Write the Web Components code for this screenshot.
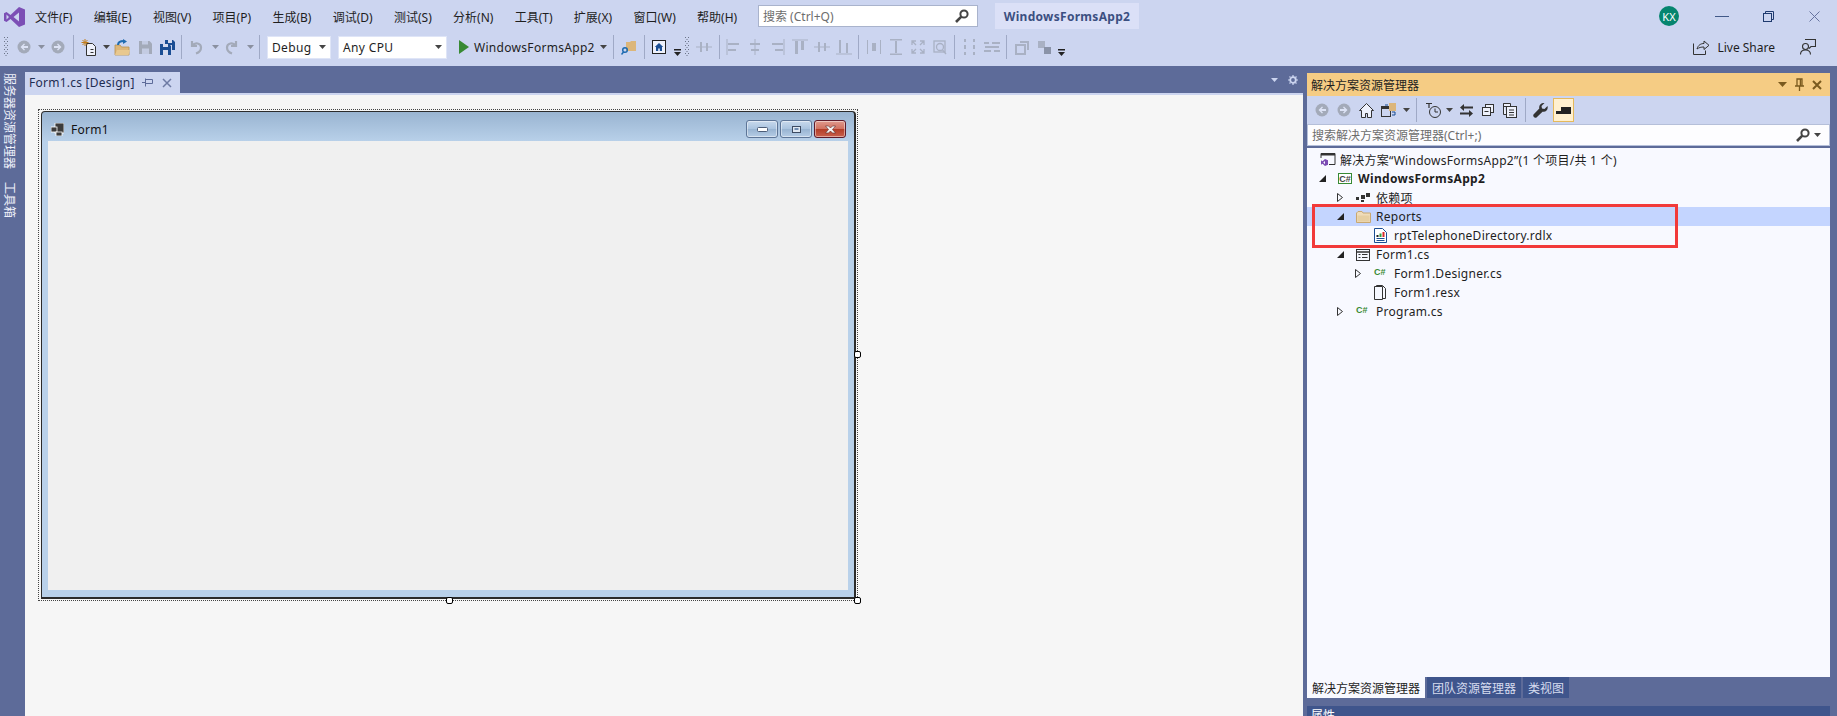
<!DOCTYPE html>
<html>
<head>
<meta charset="utf-8">
<style>
  html, body { margin: 0; padding: 0; overflow: hidden; }
  body { font: 12px "Noto Sans", "Noto Sans CJK SC", sans-serif; color: #1e1e1e; background: #5d6b99; }
</style>
</head>
<body>
<vs-app></vs-app>
<script>
const GREY = "#a3aab9";
const LINE = "#a9b1c4";
const ICONS = {
  grip: `<svg width="6" height="22" viewBox="0 0 6 22"><path d="M1 1h1v1H1zM4 1h1v1H4zM2.500 3h1v1h-1zM1 5h1v1H1zM4 5h1v1H4zM2.500 7h1v1h-1zM1 9h1v1H1zM4 9h1v1H4zM2.500 11h1v1h-1zM1 13h1v1H1zM4 13h1v1H4zM2.500 15h1v1h-1zM1 17h1v1H1zM4 17h1v1H4zM2.500 19h1v1h-1z" fill="#6b7488"/></svg>`,
  sep: `<svg width="1" height="24"><rect width="1" height="24" fill="#9fa9c6"/></svg>`,
  arrow: `<svg width="7" height="4"><path d="M0 0h7L3.500 4z" fill="#444"/></svg>`,
  arrowoff: `<svg width="7" height="4"><path d="M0 0h7L3.500 4z" fill="#8a90a0"/></svg>`,
  more: `<svg width="7" height="7" style="margin-top:11px"><rect width="7" height="1.500" fill="#222"/><path d="M0 3h7L3.500 7z" fill="#222"/></svg>`,
  back: `<svg width="14" height="14" viewBox="0 0 14 14"><circle cx="7" cy="7" r="6.500" fill="${GREY}"/><path d="M11 6H6.500L8 4.300 7 3.500 3.500 7 7 10.500l1-.8L6.500 8H11z" fill="#dde3f5"/></svg>`,
  fwd: `<svg width="14" height="14" viewBox="0 0 14 14"><circle cx="7" cy="7" r="6.500" fill="${GREY}"/><path d="M3 6h4.500L6 4.300 7 3.500 10.500 7 7 10.500l-1-.8L7.500 8H3z" fill="#dde3f5"/></svg>`,
  newproj: `<svg width="16" height="17" viewBox="0 0 16 17"><path d="M5.500 4.500h6l3 3v9h-9z" fill="#eef1fb" stroke="#333"/><path d="M9.500 13.500h3M9.500 10.500h3" stroke="#333"/><path d="M4 0v7M.5 3.500h7M1.500 1l5 5M6.500 1l-5 5" stroke="#c27d1a"/></svg>`,
  open: `<svg width="17" height="17" viewBox="0 0 17 17"><path d="M1 6h5l1.500 2H15v8H1z" fill="#dcb67a" stroke="#b8924f" stroke-width=".8"/><path d="M3 11h13l-1.500 5H1z" fill="#e8c88f"/><path d="M4 6c0-3 3-4 6-4" fill="none" stroke="#1e6bb0" stroke-width="2"/><path d="M9 0l4 2.500L9 5z" fill="#1e6bb0"/></svg>`,
  save: `<svg width="13" height="13" viewBox="0 0 13 13"><path d="M0 0h10.500L13 2.500V13H0z" fill="${GREY}"/><rect x="3" y="0" width="6" height="3.500" fill="#c3cbe2"/><rect x="3" y="7.500" width="7" height="5.500" fill="#c3cbe2"/></svg>`,
  saveall: `<svg width="15" height="15" viewBox="0 0 15 15"><path d="M5 0h8l2 2v8h-3V5H5z" fill="#1b4e94"/><rect x="8" y="0" width="4" height="3" fill="#d5dbee"/><path d="M0 4h9l2 2v9H0z" fill="#1b4e94"/><rect x="3" y="4" width="5" height="3" fill="#d5dbee"/><rect x="3" y="10" width="5" height="5" fill="#d5dbee"/></svg>`,
  undo: `<svg width="14" height="16" viewBox="0 0 14 16"><path d="M3 2v5h5M3.500 6.500C6 3 12 4 12 8.500c0 3-2 5-5 6" fill="none" stroke="${GREY}" stroke-width="2.200"/></svg>`,
  redo: `<svg width="14" height="16" viewBox="0 0 14 16"><path d="M11 2v5H6M10.500 6.500C8 3 2 4 2 8.500c0 3 2 5 5 6" fill="none" stroke="${GREY}" stroke-width="2.200"/></svg>`,
  play: `<svg width="10" height="14"><path d="M0 0l10 7-10 7z" fill="#388a34"/></svg>`,
  find: `<svg width="16" height="16" viewBox="0 0 16 16"><path d="M5 3h4l1-1h5v10H5z" fill="#dcb67a"/><circle cx="4" cy="11" r="2.300" fill="none" stroke="#1e6bb0" stroke-width="1.500"/><path d="M2.500 13L.5 15.500" stroke="#1e6bb0" stroke-width="1.500"/></svg>`,
  win: `<svg width="14" height="14" viewBox="0 0 14 14"><rect x=".5" y=".5" width="13" height="13" fill="#eef1fb" stroke="#222"/><path d="M7 3L2.800 7H4v4h2.200V8.500h1.600V11H10V7h1.200z" fill="#1b4e94"/></svg>`,
  al1: `<svg width="14" height="16"><path d="M1 0v16" stroke="${LINE}"/><path d="M2 4h11v2H2zM2 10h8v2H2z" fill="${LINE}"/></svg>`,
  al2: `<svg width="14" height="16"><path d="M7 0v16" stroke="${LINE}"/><path d="M2 4h10v2H2zM3 10h8v2H3z" fill="${LINE}"/></svg>`,
  al3: `<svg width="14" height="16"><path d="M13 0v16" stroke="${LINE}"/><path d="M1 4h11v2H1zM4 10h8v2H4z" fill="${LINE}"/></svg>`,
  al4: `<svg width="16" height="16"><path d="M0 1h16" stroke="${LINE}"/><path d="M3 2h3v13H3zM9 2h3v9H9z" fill="${LINE}"/></svg>`,
  al5: `<svg width="16" height="14"><path d="M0 7h16" stroke="${LINE}"/><path d="M4 2h2v10H4zM10 3h2v8h-2z" fill="${LINE}"/></svg>`,
  al6: `<svg width="16" height="16"><path d="M0 15h16" stroke="${LINE}"/><path d="M3 1h2v13H3zM10 4h2v10h-2z" fill="${LINE}"/></svg>`,
  sz1: `<svg width="14" height="14"><path d="M.5 0v14M13.500 0v14" stroke="${LINE}"/><path d="M5 3h4v8H5z" fill="${LINE}"/></svg>`,
  sz2: `<svg width="14" height="16"><path d="M1 .5h12M1 15.500h12" stroke="${LINE}" stroke-width="2"/><path d="M6 2h2v12H6z" fill="${LINE}"/></svg>`,
  sz3: `<svg width="14" height="14" fill="none" stroke="${LINE}" stroke-width="1.300"><path d="M1 5V1h4M9 1h4v4M13 9v4H9M5 13H1V9M1 1l4 4M13 1L9 5M13 13L9 9M1 13l4-4"/></svg>`,
  sz4: `<svg width="14" height="15" fill="none" stroke="${LINE}" stroke-width="1.300"><rect x="1" y="1" width="11" height="11"/><circle cx="7" cy="7" r="3.500"/><path d="M9.500 10l3.500 4"/></svg>`,
  sp1: `<svg width="14" height="16"><path d="M2 0v3M2 6v4M2 13v3M11 0v3M11 6v4M11 13v3" stroke="${LINE}" stroke-width="2"/></svg>`,
  sp2: `<svg width="16" height="14"><path d="M0 3h5M8 3h8M0 11h7M10 11h6M1 7h14" stroke="${LINE}" stroke-width="2"/></svg>`,
  or1: `<svg width="15" height="15" fill="none" stroke="${LINE}" stroke-width="2"><rect x="1" y="5" width="9" height="9"/><path d="M5 2h8v8"/></svg>`,
  or2: `<svg width="13" height="13"><rect x="0" y="0" width="7" height="7" fill="${LINE}"/><rect x="6" y="6" width="7" height="7" fill="#8a93a8"/></svg>`,
  share: `<svg width="17" height="15" viewBox="0 0 17 15" fill="none" stroke="#333"><path d="M.5 3.500v11h12v-4"/><path d="M4 9c1-4 4-5.500 7-5.500V1l5 4.300-5 4.200V7C8 7 6 7.500 4 9z"/></svg>`,
  feedback: `<svg width="16" height="16" viewBox="0 0 16 16" fill="none" stroke="#333" stroke-width="1.100"><circle cx="5.500" cy="7.500" r="3"/><path d="M.5 15.500c0-3 2-4.500 5-4.500s5 1.500 5 4.500"/><path d="M5 .5h10.500v7H11l-2 2"/></svg>`,
  mag: `<svg width="14" height="14" viewBox="0 0 14 14" fill="none" stroke="#444" stroke-width="2"><circle cx="9" cy="5" r="3.600"/><path d="M6.300 7.700L1 13" stroke-width="2.600"/></svg>`,
  min: `<svg width="14" height="2"><rect width="14" height="1" fill="#1e3a6e" opacity=".8"/></svg>`,
  restore: `<svg width="11" height="11" fill="none" stroke="#1e3a6e"><rect x=".5" y="2.500" width="8" height="8"/><path d="M2.500 2.500v-2h8v8h-2"/></svg>`,
  close: `<svg width="11" height="11" stroke="#6673a0"><path d="M.5.500l10 10M10.500.500l-10 10"/></svg>`,
  pintab: `<svg width="11" height="9" fill="none" stroke="#5d6b99"><path d="M0 4.500h3.500M3.500 .5v8M3.500 1.500h7v4h-7"/></svg>`,
  closetab: `<svg width="10" height="10" stroke="#6d7aa3" stroke-width="1.500"><path d="M1 1l8 8M9 1L1 9"/></svg>`,
  welldrop: `<svg width="7" height="4"><path d="M0 0h7L3.500 4z" fill="#ccd5f0"/></svg>`,
  gear: `<svg width="10" height="10" viewBox="0 0 10 10"><circle cx="5" cy="5" r="2.800" fill="none" stroke="#ccd5f0" stroke-width="1.800"/><path d="M5 0v2M5 8v2M0 5h2M8 5h2M1.500 1.500l1 1M7.500 7.500l1 1M8.500 1.500l-1 1M2.500 7.500l-1 1" stroke="#ccd5f0" stroke-width="1.200"/></svg>`,
  tdrop: `<svg width="9" height="5"><path d="M0 0h9L4.500 5z" fill="#7a5a1e"/></svg>`,
  tpin: `<svg width="9" height="13" fill="none" stroke="#7a5a1e" stroke-width="1.300"><path d="M2 1h5v7H2zM0 8h9M4.500 8v5"/><path d="M5.500 1v7" stroke-width="1.500"/></svg>`,
  tclose: `<svg width="10" height="10" stroke="#7a5a1e" stroke-width="2"><path d="M1 1l8 8M9 1L1 9"/></svg>`,
  home: `<svg width="15" height="15" viewBox="0 0 15 15"><path d="M7.500 .5L.5 7.500H2.500v7h4v-4h2v4h4v-7h2z" fill="#eef1fb" stroke="#333"/></svg>`,
  sync: `<svg width="16" height="14" viewBox="0 0 16 14"><rect x=".5" y="3.500" width="9" height="10" fill="#ccd5f0" stroke="#333"/><rect x="1" y="4" width="8" height="2" fill="#333"/><rect x="8" y="0" width="7" height="8" fill="#dcb67a"/><path d="M11 9h3v3h-3" fill="none" stroke="#1b4e94"/><path d="M4 2h3" stroke="#1b4e94"/></svg>`,
  history: `<svg width="15" height="15" viewBox="0 0 15 15" fill="none" stroke="#333"><circle cx="9" cy="9" r="5.500"/><path d="M9 5.500V9h3"/><path d="M0 .5h6M3 .5V5" stroke-width="1.200"/></svg>`,
  swap: `<svg width="13" height="13" viewBox="0 0 13 13" fill="#333"><path d="M4 0v2.500h9V4.500H4V7L0 3.500zM9 6v2.500H0v2h9V13l4-3.500z"/></svg>`,
  collapse: `<svg width="12" height="12" fill="#eef1fb" stroke="#333"><rect x="3.500" y=".5" width="8" height="8"/><rect x=".5" y="3.500" width="8" height="8"/><path d="M2.500 7.500h4"/></svg>`,
  copies: `<svg width="14" height="15" fill="#eef1fb" stroke="#333"><path d="M.5 .5h7v3h-7zM.5 .5v11h3"/><rect x="3.500" y="3.500" width="10" height="11"/><path d="M6 7h5M6 9.500h5M6 12h5"/></svg>`,
  wrench: `<svg width="15" height="15" viewBox="0 0 15 15"><path d="M14.500 3l-3 3-2.500-.5L8.500 3l3-3C8.500-.5 5.500 2 6.300 5.500L.5 11.500c-1 2 1 4 3 3L9.500 8.700C13 9.500 15.500 6.500 14.500 3z" fill="#333"/></svg>`,
  pending: `<svg width="15" height="7"><rect x="0" y="4" width="15" height="3" fill="#222"/><rect x="5" y="0" width="10" height="4" fill="#222"/></svg>`,
  tri: `<svg width="7" height="7"><path d="M7 0v7H0z" fill="#222"/></svg>`,
  hollow: `<svg width="6" height="9" fill="none" stroke="#333"><path d="M.5 .5l5 4-5 4z"/></svg>`,
  sln: `<svg width="16" height="14" viewBox="0 0 16 14"><path d="M1 5V.5h14v11H9" fill="none" stroke="#333"/><rect x="1" y=".5" width="14" height="2" fill="#333"/><path d="M5 6L2.500 8.300 1 7.300v4.400l1.500-1 2.500 2.300 3-1.300V7.300zM5 8v3.300L3.300 9.600z" fill="#7b4bb3" fill-rule="evenodd"/></svg>`,
  deps: `<svg width="14" height="9" fill="#333"><rect x="0" y="4" width="3" height="3"/><rect x="5" y="2" width="4" height="4"/><rect x="5" y="7" width="3" height="2"/><rect x="10" y="0" width="4" height="4"/></svg>`,
  folder: `<svg width="15" height="12" viewBox="0 0 15 12"><path d="M.5 2l1.500-1.500h4L7 2h7.500v9.500H.5z" fill="#efdcba" stroke="#c9a871"/><path d="M1.500 4.500h12v6h-12z" fill="#e6cfa3"/></svg>`,
  report: `<svg width="13" height="15" viewBox="0 0 13 15"><path d="M.5 .5h8l4 4v10H.5z" fill="#fff" stroke="#1b4e94"/><path d="M2.500 7h2v2h-2z" fill="#222"/><path d="M5.500 5.500h2V9h-2z" fill="#2f9e3f"/><path d="M8.500 4h2v5h-2z" fill="#d62b2b"/><path d="M2.500 10.500h8M2.500 12.500h8" stroke="#1b4e94"/></svg>`,
  form: `<svg width="14" height="12" viewBox="0 0 14 12" fill="#f6f8ff" stroke="#333"><rect x=".5" y=".5" width="13" height="11"/><path d="M.5 3h13" stroke-width="1.500"/><path d="M2.500 5.500h2M6 5.500h5.500M2.500 8.500h2M6 8.500h5.500"/></svg>`,
  resx: `<svg width="12" height="15" viewBox="0 0 12 15" fill="#f6f8ff" stroke="#333"><path d="M.5 1.500h8v13h-8z"/><path d="M2.500 1.500v-1h6l3 3v10h-3" fill="none"/></svg>`,
  formcap: `<svg width="13" height="13"><rect x="4" y="0" width="9" height="10" fill="#3c3c3c" stroke="#fff" stroke-width=".8"/><rect x="0" y="4" width="6" height="5" fill="#3c3c3c" stroke="#fff" stroke-width=".8"/><rect x="5" y="9" width="6" height="4" fill="#3c3c3c" stroke="#fff" stroke-width=".8"/></svg>`
};

class VsIcon extends HTMLElement {
  constructor () {
    super();
    this.attachShadow({mode: "open"});
  }
  connectedCallback () {
    this.shadowRoot.innerHTML = `
    <style>
      :host { display: inline-flex; align-items: center; justify-content: center; flex: none; }
      svg { display: block; }
    </style>
    ${ICONS[this.getAttribute("name")] || ""}`;
  }
}
customElements.define("vs-icon", VsIcon);

// one toolbar row: "icon:width" cells, widths set so each icon falls on its spot
class VsTools extends HTMLElement {
  constructor () {
    super();
    this.attachShadow({mode: "open"});
  }
  connectedCallback () {
    let cells = this.getAttribute("cells").trim().split(/\s+/).map(c => {
      let [name, w] = c.split(":");
      return `<vs-icon name="${name}" style="width:${w}px"></vs-icon>`;
    }).join("");
    this.shadowRoot.innerHTML = `
    <style>
      :host { display: flex; align-items: center; height: 100%; flex: none; }
    </style>
    ${cells}`;
  }
}
customElements.define("vs-tools", VsTools);

class VsCombo extends HTMLElement {
  constructor () {
    super();
    this.attachShadow({mode: "open"});
  }
  connectedCallback () {
    this.shadowRoot.innerHTML = `
    <style>
      :host { display: flex; align-items: center; justify-content: space-between; height: 23px; box-sizing: border-box;
              background: #fff; border: 1px solid #dfe5f7; padding: 0 3px 0 4px; flex: none; color: #1e1e1e; letter-spacing: .35px; }
    </style>
    <slot></slot><vs-icon name="arrow" style="width:10px"></vs-icon>`;
  }
}
customElements.define("vs-combo", VsCombo);

class VsMenubar extends HTMLElement {
  constructor () {
    super();
    this.attachShadow({mode: "open"});
  }
  connectedCallback () {
    let items = ["文件(F)", "编辑(E)", "视图(V)", "项目(P)", "生成(B)", "调试(D)", "测试(S)", "分析(N)", "工具(T)", "扩展(X)", "窗口(W)", "帮助(H)"];
    this.shadowRoot.innerHTML = `
    <style>
      :host { display: flex; align-items: center; height: 33px; flex: none; background: #ccd5f0; position: relative; }
      .logo { width: 25px; flex: none; display: flex; justify-content: center; padding-left: 3px; box-sizing: border-box; }
      .menu { width: 733px; flex: none; display: flex; padding-left: 10px; box-sizing: border-box; gap: 21.3px; }
      .search { width: 220px; height: 22px; flex: none; box-sizing: border-box; background: #fff; border: 1px solid #a9b3cc;
                display: flex; align-items: center; justify-content: space-between; padding: 0 8px 0 4px; color: #6d6d6d; margin-top: -1px; }
      .pill { margin-left: 17px; width: 144px; height: 26px; flex: none; background: #dbe0f7; color: #3b4f81; font-weight: 700; letter-spacing: .3px;
              display: flex; align-items: center; justify-content: center; margin-top: -1px; }
      .right { margin-left: auto; display: flex; align-items: center; }
      .avatar { width: 20px; height: 20px; border-radius: 50%; background: #05856f; color: #fff; font-size: 11px; margin-right: 20px;
                display: flex; align-items: center; justify-content: center; margin-top: -1px; }
      .wbtn { width: 46px; display: flex; justify-content: center; }
    </style>
    <div class="logo">
      <svg width="21" height="20" viewBox="0 0 21 20"><path d="M15 0L6.500 8 2.500 5 0 6.200v7.600L2.500 15l4-3L15 20l6-2.500v-15zM2.500 7.500L5 10l-2.500 2.500zM15 5.500v9L9.500 10z" fill="#7c4fb5" fill-rule="evenodd"/></svg>
    </div>
    <div class="menu">${items.map(i => `<span>${i}</span>`).join("")}</div>
    <div class="search"><span>搜索 (Ctrl+Q)</span><vs-icon name="mag"></vs-icon></div>
    <div class="pill">WindowsFormsApp2</div>
    <div class="right">
      <div class="avatar">KX</div>
      <div class="wbtn"><vs-icon name="min"></vs-icon></div>
      <div class="wbtn"><vs-icon name="restore"></vs-icon></div>
      <div class="wbtn"><vs-icon name="close"></vs-icon></div>
    </div>`;
  }
}
customElements.define("vs-menubar", VsMenubar);

class VsToolbar extends HTMLElement {
  constructor () {
    super();
    this.attachShadow({mode: "open"});
  }
  connectedCallback () {
    this.shadowRoot.innerHTML = `
    <style>
      :host { display: flex; align-items: center; height: 33px; flex: none; background: #ccd5f0; box-sizing: border-box; padding-bottom: 5px; }
      .debug { width: 64px; margin-left: 7px; }
      .cpu { width: 109px; margin-left: 7px; }
      .play { margin-left: 12px; width: 10px; }
      .start { margin-left: 5px; width: 121px; letter-spacing: .3px; white-space: nowrap; }
      .right { margin-left: auto; display: flex; align-items: center; padding-right: 21px; }
      .live { margin: 0 25px 0 7px; }
    </style>
    <vs-tools cells="grip:12 back:24 arrowoff:10 fwd:24 sep:6 newproj:26 arrow:8 open:24 save:22 saveall:22 sep:6 undo:24 arrowoff:14 redo:20 arrowoff:16 sep:2"></vs-tools>
    <vs-combo class="debug">Debug</vs-combo>
    <vs-combo class="cpu">Any CPU</vs-combo>
    <vs-icon class="play" name="play"></vs-icon>
    <span class="start">WindowsFormsApp2</span>
    <vs-tools cells="arrow:16 sep:4 find:28 sep:2 win:28 more:8 grip:12 al5:22 sep:8 al1:20 al2:24 al3:22 al4:22 al5:22 al6:22 sep:6 sz1:26 sz2:18 sz3:26 sz4:18 sep:10 sp1:22 sp2:22 sep:6 or1:26 or2:18 more:16"></vs-tools>
    <div class="right">
      <vs-icon name="share"></vs-icon>
      <span class="live">Live Share</span>
      <vs-icon name="feedback"></vs-icon>
    </div>`;
  }
}
customElements.define("vs-toolbar", VsToolbar);

class VsRail extends HTMLElement {
  constructor () {
    super();
    this.attachShadow({mode: "open"});
  }
  connectedCallback () {
    this.shadowRoot.innerHTML = `
    <style>
      :host { display: flex; flex-direction: column; width: 25px; flex: none; background: #5d6b99; color: #eef0fa;
              padding-top: 7px; box-sizing: border-box; align-items: flex-start; }
      span { writing-mode: vertical-rl; text-orientation: sideways; line-height: 18px; margin-bottom: 13px; }
    </style>
    <span>服务器资源管理器</span>
    <span>工具箱</span>`;
  }
}
customElements.define("vs-rail", VsRail);

class DesignForm extends HTMLElement {
  constructor () {
    super();
    this.attachShadow({mode: "open"});
  }
  connectedCallback () {
    this.shadowRoot.innerHTML = `
    <style>
      :host { display: block; position: relative; width: 820px; height: 492px; margin: 14px 0 0 13px;
              box-sizing: border-box; border: 1px dotted #444; padding: 1px 1px 1px 2px; }
      .win { height: 100%; box-sizing: border-box; display: flex; flex-direction: column;
             border: 1px solid #2b2b2b; border-width: 1px 2px 2px 1px; border-radius: 4px 4px 0 0;
             background: linear-gradient(#99b4d1 0, #b9d1ea 30px, #b9d1ea 100%); }
      .cap { height: 29px; flex: none; box-sizing: border-box; padding: 5px 8px 0 9px; display: flex; align-items: center; }
      .cap vs-icon { margin-right: 7px; }
      .cap .t { flex: 1; letter-spacing: .3px; color: #111; }
      .btns { display: flex; gap: 2px; }
      .b { width: 32px; height: 18px; box-sizing: border-box; border: 1px solid #5d7597; border-radius: 3px;
           background: linear-gradient(#c8d9ec 0, #a9c3df 50%, #97b3d1 50%, #b6cde6 100%);
           box-shadow: inset 0 0 0 1px rgba(255,255,255,.45); display: flex; align-items: center; justify-content: center; }
      .b.x { border-color: #5e1a2a; background: linear-gradient(#e09a8d 0, #d0705f 50%, #b23c26 50%, #c9604d 100%); }
      .client { flex: 1; background: #f0f0f0; margin: 0 6px 7px 6px; }
      .h { position: absolute; width: 5px; height: 5px; background: #fff; border: 1px solid #000; border-radius: 2px; }
      .h.e { right: -4px; top: 241px; }
      .h.s { left: 407px; bottom: -4px; }
      .h.se { right: -4px; bottom: -4px; }
      svg { display: block; }
    </style>
    <div class="win">
      <div class="cap">
        <vs-icon name="formcap"></vs-icon>
        <span class="t">Form1</span>
        <div class="btns">
          <div class="b"><svg width="11" height="5"><rect x=".5" y=".5" width="10" height="4" rx="1" fill="#fff" stroke="#4c5d78"/></svg></div>
          <div class="b"><svg width="9" height="7"><rect x=".5" y=".5" width="8" height="6" fill="#dfe7f1" stroke="#3d4b62"/><rect x="2.500" y="2" width="4" height="2" fill="#6f8bb0"/></svg></div>
          <div class="b x"><svg width="11" height="9"><path d="M.5 1h3L5.500 3 7.500 1h3L7.500 4.500l3 3.500h-3L5.500 6l-2 2h-3l3-3.500z" fill="#f4f4f4" stroke="#5a2c2c" stroke-width=".6"/></svg></div>
        </div>
      </div>
      <div class="client"></div>
    </div>
    <i class="h e"></i><i class="h s"></i><i class="h se"></i>`;
  }
}
customElements.define("design-form", DesignForm);

class VsDocument extends HTMLElement {
  constructor () {
    super();
    this.attachShadow({mode: "open"});
  }
  connectedCallback () {
    this.shadowRoot.innerHTML = `
    <style>
      :host { display: flex; flex-direction: column; width: 1278px; flex: none; }
      .well { height: 27px; flex: none; display: flex; align-items: flex-end; background: #5d6b99; }
      .tab { width: 155px; height: 21px; box-sizing: border-box; background: #ccd5f0; display: flex; align-items: center;
             padding-left: 4px; color: #1e2d52; letter-spacing: .25px; white-space: nowrap; }
      .tab .n { width: 113px; flex: none; }
      .tab vs-icon:last-child { margin-left: 9px; }
      .tools { margin-left: auto; height: 100%; display: flex; align-items: center; gap: 10px; padding: 0 5px 0 0; margin-top: -4px; }
      .strip { height: 2px; flex: none; background: #ccd5f0; }
      .body { flex: 1; background: #f6f6f6; overflow: hidden; }
    </style>
    <div class="well">
      <div class="tab"><span class="n">Form1.cs [Design]</span><vs-icon name="pintab"></vs-icon><vs-icon name="closetab"></vs-icon></div>
      <div class="tools"><vs-icon name="welldrop"></vs-icon><vs-icon name="gear"></vs-icon></div>
    </div>
    <div class="strip"></div>
    <div class="body"><design-form></design-form></div>`;
  }
}
customElements.define("vs-document", VsDocument);

class TreeRow extends HTMLElement {
  constructor () {
    super();
    this.attachShadow({mode: "open"});
  }
  connectedCallback () {
    let depth = Number(this.getAttribute("depth") || 0);
    let arrow = this.getAttribute("arrow");
    let icon = this.getAttribute("icon");
    let glyph = icon == "cs"
      ? `<span class="cs">C#</span>`
      : icon == "proj" ? `<span class="proj">C#</span>`
      : `<vs-icon name="${icon}"></vs-icon>`;
    this.shadowRoot.innerHTML = `
    <style>
      :host { display: flex; align-items: center; height: 19px; padding-left: ${depth == 0 ? 13 : 11 + (depth - 1) * 18}px; box-sizing: border-box;
              letter-spacing: .27px; white-space: nowrap; color: #1e1e1e; }
      :host([selected]) { background: #c4d5ff; }
      :host([bold]) { font-weight: 700; letter-spacing: .35px; }
      .a { width: 20px; flex: none; display: flex; padding-left: 1px; box-sizing: border-box; }
      .i { width: 20px; flex: none; display: flex; justify-content: flex-start; align-items: center; }
      .cs { font: 700 9px "Liberation Sans", sans-serif; color: #388a34; letter-spacing: 0; margin-top: -3px; }
      .proj { font: 700 9px "Liberation Sans", sans-serif; color: #444; letter-spacing: 0; border: 1px solid #388a34; background: #fff;
              width: 14px; height: 11px; box-sizing: border-box; display: flex; align-items: center; justify-content: center; }
    </style>
    ${depth == 0 ? "" : `<div class="a">${arrow ? `<vs-icon name="${arrow}"></vs-icon>` : ""}</div>`}
    <div class="i">${glyph}</div>
    <span><slot></slot></span>`;
  }
}
customElements.define("tree-row", TreeRow);

class SolutionPanel extends HTMLElement {
  constructor () {
    super();
    this.attachShadow({mode: "open"});
  }
  connectedCallback () {
    this.shadowRoot.innerHTML = `
    <style>
      :host { display: flex; flex-direction: column; width: 523px; flex: none; margin: 7px 0 0 4px; position: relative; }
      .title { height: 23px; flex: none; background: #f5cc84; display: flex; align-items: center; padding: 0 8px 0 4px; color: #1e1e1e; }
      .title .t { flex: 1; }
      .title vs-icon { margin-left: 8px; }
      .bar { height: 28px; flex: none; background: #ccd5f0; display: flex; align-items: center; padding-left: 3px; }
      .on { width: 21px; height: 24px; flex: none; box-sizing: border-box; background: #fff0d0; border: 1px solid #e5b95c;
            display: flex; align-items: center; justify-content: center; }
      .search { height: 22px; flex: none; box-sizing: border-box; background: #fdfdff; border: 1px solid #b5bfd9;
                display: flex; align-items: center; padding: 0 4px 0 4px; color: #6d6d6d; }
      .search span { flex: 1; }
      .tree { flex: 1; background: #f8f9ff; margin-top: 2px; padding-top: 2px; min-height: 0; }
      .tabs { height: 21px; flex: none; display: flex; gap: 2px; background: #5d6b99; }
      .tabs span { padding: 0 5px; display: flex; align-items: center; background: #3f558c; color: #d6dcef; }
      .tabs span.cur { background: #f8f9ff; color: #1e1e1e; }
      .next { height: 10px; flex: none; margin-top: 8px; background: #3f558c; color: #fff; overflow: hidden; padding: 0 4px; line-height: 20px; }
      .mark { position: absolute; left: 5px; top: 131px; width: 366px; height: 44px; box-sizing: border-box; border: 3px solid #f23a3a; pointer-events: none; }
    </style>
    <div class="title">
      <span class="t">解决方案资源管理器</span>
      <vs-icon name="tdrop"></vs-icon><vs-icon name="tpin"></vs-icon><vs-icon name="tclose"></vs-icon>
    </div>
    <div class="bar">
      <vs-tools cells="back:23 fwd:22 home:22 sync:24 arrow:10 sep:10 history:24 arrow:8 swap:26 collapse:18 copies:26 sep:4 wrench:26"></vs-tools>
      <div class="on"><vs-icon name="pending"></vs-icon></div>
    </div>
    <div class="search"><span>搜索解决方案资源管理器(Ctrl+;)</span><vs-icon name="mag"></vs-icon><vs-icon name="arrow" style="width:15px"></vs-icon></div>
    <div class="tree"><slot></slot></div>
    <div class="tabs"><span class="cur">解决方案资源管理器</span><span>团队资源管理器</span><span>类视图</span></div>
    <div class="next">属性</div>
    <div class="mark"></div>`;
  }
}
customElements.define("solution-panel", SolutionPanel);

class VsApp extends HTMLElement {
  constructor () {
    super();
    this.attachShadow({mode: "open"});
  }
  connectedCallback () {
    this.shadowRoot.innerHTML = `
    <style>
      :host { display: flex; flex-direction: column; width: 1837px; height: 716px; overflow: hidden; }
      .main { flex: 1; display: flex; min-height: 0; background: #5d6b99; }
    </style>
    <vs-menubar></vs-menubar>
    <vs-toolbar></vs-toolbar>
    <div class="main">
      <vs-rail></vs-rail>
      <vs-document></vs-document>
      <solution-panel>
        <tree-row depth="0" icon="sln">解决方案“WindowsFormsApp2”(1 个项目/共 1 个)</tree-row>
        <tree-row depth="1" arrow="tri" icon="proj" bold>WindowsFormsApp2</tree-row>
        <tree-row depth="2" arrow="hollow" icon="deps">依赖项</tree-row>
        <tree-row depth="2" arrow="tri" icon="folder" selected>Reports</tree-row>
        <tree-row depth="3" icon="report">rptTelephoneDirectory.rdlx</tree-row>
        <tree-row depth="2" arrow="tri" icon="form">Form1.cs</tree-row>
        <tree-row depth="3" arrow="hollow" icon="cs">Form1.Designer.cs</tree-row>
        <tree-row depth="3" icon="resx">Form1.resx</tree-row>
        <tree-row depth="2" arrow="hollow" icon="cs">Program.cs</tree-row>
      </solution-panel>
    </div>`;
  }
}
customElements.define("vs-app", VsApp);
</script>
</body>
</html>
